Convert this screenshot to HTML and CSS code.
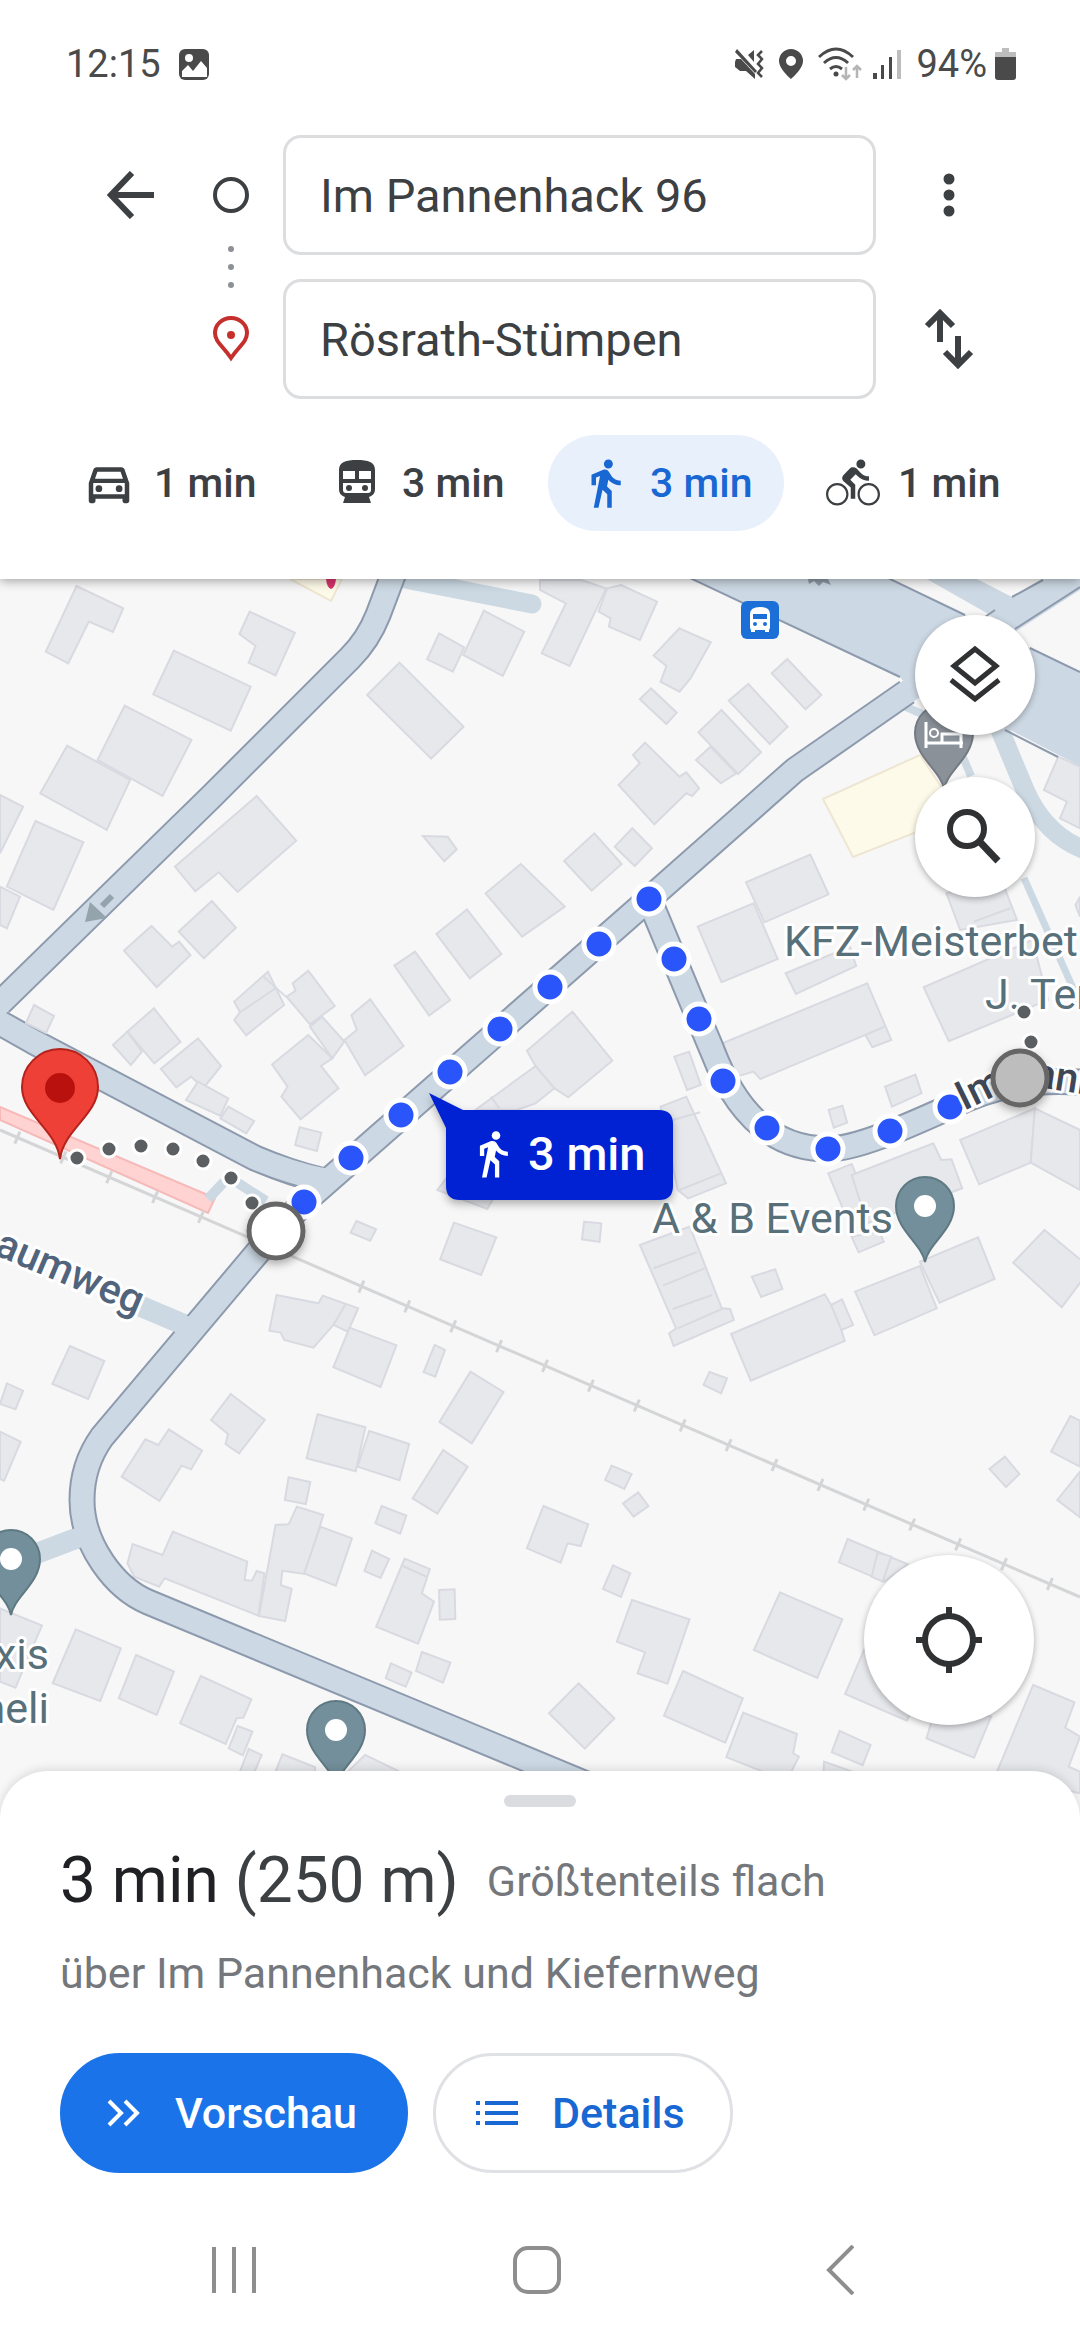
FILE: index.html
```html
<!DOCTYPE html>
<html lang="de">
<head>
<meta charset="utf-8">
<meta name="viewport" content="width=device-width, initial-scale=1">
<title>Route nach Rösrath-Stümpen</title>
<link rel="stylesheet" href="styles.css">
</head>
<body>
<div class="screen">
  <header class="top">
    <div class="status">
      <span>12:15</span>
      <svg class="status-photo" width="30" height="31" viewBox="0 0 30 31"><rect width="30" height="31" rx="6"/><circle cx="10" cy="9" r="4" fill="#fff"/><path d="M3 28V22l6-6 5 6 8-10 6 7v9z" fill="#fff"/></svg>
      <div class="status-icons">
        <svg width="29" height="30" viewBox="0 0 29 30"><path d="M1 10h5l14 15v5l-9-8H5l-5-4v-5zM13 6l6-5v12zM2 0l20 22-2 2L0 3z"/><path d="M27 2l-4 4 4 4-4 5 4 4-4 5 4 4" fill="none" stroke="#4a4a4a" stroke-width="2.500"/></svg>
        <svg width="24" height="30" viewBox="0 0 24 30"><path fill-rule="evenodd" d="M12 0a12 12 0 0 0-12 12c0 8 12 18 12 18s12-10 12-18A12 12 0 0 0 12 0zm0 7a5 5 0 1 1 0 10 5 5 0 0 1 0-10z"/></svg>
        <svg width="44" height="34" viewBox="0 0 44 34"><g fill="none" stroke="#4a4a4a" stroke-width="3"><path d="M1 10q17-16 34 0M6 16q12-11 24 0M12 22q6-5 12 0"/></g><circle cx="18" cy="27" r="2.500"/><path d="M28 20v12m-4-4l4 4 4-4M39 31V19m-4 4l4-4 4 4" fill="none" stroke="#b5b5b5" stroke-width="2.500"/></svg>
        <svg width="28" height="30" viewBox="0 0 28 30"><path d="M0 24h4v6H0zM8 16h3v14H8zM16 8h3v22h-3z"/><path d="M24 1h4v29h-4z" fill="#bdbdbd"/></svg>
        <span class="battery-text">94%</span>
        <svg width="21" height="32" viewBox="0 0 21 32"><path d="M7 0h7v4h7v6H0V4h7z" fill="#bdbdbd"/><path d="M0 9h21v20q0 3-3 3H3q-3 0-3-3z"/></svg>
      </div>
    </div>

    <form class="places">
      <button class="icon-button back" type="button" aria-label="Zurück"><svg width="48" height="48" viewBox="0 0 48 48"><path d="M47 24H4M25 2L4 24l21 22" fill="none" stroke="#3c4043" stroke-width="6"/></svg></button>
      <svg class="markers" width="60" height="264" viewBox="0 0 60 264"><circle cx="30" cy="60" r="16" fill="none" stroke="#3c4043" stroke-width="4"/><g fill="#8d9094"><circle cx="30" cy="114" r="3"/><circle cx="30" cy="132" r="3"/><circle cx="30" cy="150" r="3"/></g><path d="M30 223C22 211 14 207 14 198a16 15 0 0 1 32 0c0 9-8 13-16 25z" fill="none" stroke="#c5302c" stroke-width="4"/><circle cx="30" cy="200" r="4" fill="#c5302c"/></svg>
      <input class="place" type="text" value="Im Pannenhack 96" aria-label="Startort">
      <button class="icon-button" type="button" aria-label="Weitere Optionen"><svg width="12" height="44" viewBox="0 0 12 44" fill="#3c4043"><circle cx="6" cy="6" r="5.500"/><circle cx="6" cy="22" r="5.500"/><circle cx="6" cy="38" r="5.500"/></svg></button>
      <input class="place" type="text" value="Rösrath-Stümpen" aria-label="Ziel">
      <button class="icon-button" type="button" aria-label="Start und Ziel tauschen"><svg width="50" height="60" viewBox="0 0 50 60"><path d="M16 33V5M3 17L16 4l13 13M34 27v28M21 43l13 13 13-13" fill="none" stroke="#3c4043" stroke-width="6"/></svg></button>
    </form>

    <nav class="modes">
      <button class="mode" type="button"><svg viewBox="0 0 24 24"><path d="M18.920 6.010C18.720 5.420 18.160 5 17.500 5h-11c-.66 0-1.210.42-1.420 1.010L3 12v8c0 .55.45 1 1 1h1c.55 0 1-.45 1-1v-1h12v1c0 .55.45 1 1 1h1c.55 0 1-.45 1-1v-8l-2.080-5.990zM6.850 7h10.290l1.080 3.110H5.770L6.850 7zM19 17H5v-5h14v5z"/><circle cx="7.500" cy="14.500" r="1.500"/><circle cx="16.500" cy="14.500" r="1.500"/></svg>1 min</button>
      <button class="mode" type="button"><svg viewBox="0 0 54 54"><path fill-rule="evenodd" d="M9 14C9 6 16 4 27 4s18 2 18 10v19c0 5-3 7-6 8l2 6H13l2-6c-3-1-6-3-6-8zm4 1v8h12v-8zm16 0v8h12v-8zM13 27v7q0 3 3 3h22q3 0 3-3v-7z"/><circle cx="19" cy="32" r="3"/><circle cx="35" cy="32" r="3"/></svg>3 min</button>
      <button class="mode mode-active" type="button"><svg viewBox="0 0 24 24"><path d="M13.500 5.500c1.100 0 2-.9 2-2s-.9-2-2-2-2 .9-2 2 .9 2 2 2zM9.800 8.900L7 23h2.100l1.800-8 2.100 2v6h2v-7.500l-2.100-2 .6-3C14.800 12 16.800 13 19 13v-2c-1.900 0-3.500-1-4.300-2.400l-1-1.600c-.4-.6-1-1-1.700-1-.3 0-.5.1-.8.1L6 8.300V13h2V9.600l1.800-.7"/></svg>3 min</button>
      <button class="mode" type="button"><svg viewBox="0 0 24 24"><path d="M15.500 5.500c1.100 0 2-.9 2-2s-.9-2-2-2-2 .9-2 2 .9 2 2 2zM5 12c-2.800 0-5 2.200-5 5s2.200 5 5 5 5-2.200 5-5-2.200-5-5-5zm0 9c-2.200 0-4-1.800-4-4s1.800-4 4-4 4 1.800 4 4-1.800 4-4 4zm5.800-10.500l2.400-2.400.8.8c1.300 1.300 3 2.100 5.100 2.100V9c-1.500 0-2.700-.6-3.600-1.500l-1.900-1.900c-.5-.4-1-.6-1.600-.6s-1.100.2-1.400.6L7.800 8.400c-.4.4-.6.9-.6 1.400 0 .6.2 1.100.6 1.400L11 14v5h2v-6.200l-2.200-2.300zM19 12c-2.800 0-5 2.200-5 5s2.200 5 5 5 5-2.200 5-5-2.200-5-5-5zm0 9c-2.200 0-4-1.800-4-4s1.800-4 4-4 4 1.800 4 4-1.800 4-4 4z"/></svg>1 min</button>
    </nav>
  </header>

  <main class="map">
    <svg class="map-canvas" viewBox="0 579 1080 1240" preserveAspectRatio="xMidYMin slice">
      <defs>
        <path id="pin" d="M0 56C-3 38-29 24-29 0a29 29 0 0 1 58 0C29 24 3 38 0 56z"/>
        <filter id="soft" x="-30%" y="-30%" width="160%" height="180%"><feDropShadow dx="0" dy="4" stdDeviation="4" flood-opacity=".3"/></filter>
      </defs>

      <!-- buildings, north-west -->
      <g class="building" transform="translate(0 560) scale(.3444 .3333)">
        <path d="M222 78L358 145 328 216 258 185 198 310 133 275z"/>
        <path d="M725 155L856 218 800 346 722 308 742 258 695 222z"/>
        <path d="M505 272L728 380 670 512 445 403z"/>
        <path d="M362 437L556 540 472 708 283 600z"/>
        <path d="M195 557L378 660 310 810 117 700z"/>
        <path d="M0 705L67 740 0 880z"/>
        <path d="M103 783L242 847 155 1050 20 980z"/>
        <path d="M0 980L58 1010 20 1105 0 1095z"/>
        <path d="M745 708L860 842 690 996 635 937 567 994 508 920z"/>
        <path d="M1160 308L1346 500 1252 596 1066 405z"/>
        <path d="M1275 220L1348 262 1315 335 1240 298z"/>
        <path d="M1405 152L1522 215 1460 348 1345 285z"/>
        <path d="M1228 828L1300 830 1326 868 1290 904z"/>
        <path d="M1512 912L1640 1040 1516 1130 1410 1000z"/>
        <path d="M1356 1048L1456 1182 1364 1255 1267 1122z"/>
        <path d="M1205 1175L1307 1320 1246 1367 1145 1217z"/>
        <path d="M615 1023L685 1103 592 1195 519 1115z"/>
        <path d="M440 1098L500 1160 520 1145 553 1186 455 1282 360 1172z"/>
        <path d="M778 1235L825 1335 715 1426 680 1380 697 1357 680 1325z"/>
        <path d="M697 1357L800 1285M765 1250L830 1310"/>
        <path d="M895 1232L972 1338 900 1393 832 1310 858 1293 850 1270z"/>
        <path d="M1075 1318L1172 1458 1060 1546 1000 1440 1036 1410 1020 1365z"/>
        <path d="M935 1370L1000 1445 965 1495 900 1400z"/>
        <path d="M447 1345L524 1446 448 1510 370 1415z"/>
        <path d="M370 1415L412 1475 380 1515 328 1455z"/>
      </g>
      <!-- buildings, north-east -->
      <g class="building" transform="translate(540 560) scale(.3444 .3333)">
        <path d="M0 60H120L192 85 86 318 5 280 75 130 0 90z"/>
        <path d="M235 75L340 125 290 240 200 200 205 175 170 155 195 85z"/>
        <path d="M405 205L496 247 437 355 405 395 350 365 367 318 330 287z"/>
        <path d="M322 385L397 458 367 492 290 418z"/>
        <path d="M718 297L817 405 771 448 673 340z"/>
        <path d="M605 372L719 500 667 552 548 422z"/>
        <path d="M527 450L642 577 575 642 460 517z"/>
        <path d="M495 560L570 640 525 670 453 600z"/>
        <path d="M305 548L405 650 425 637 462 685 442 708 425 700 332 793 228 675 290 610 270 585z"/>
        <path d="M268 805L325 865 275 918 217 860z"/>
        <path d="M158 820L237 912 150 992 70 903z"/>
        <path d="M785 884L838 1003 652 1087 598 967z"/>
        <path d="M620 1030L690 1197 527 1267 458 1100z"/>
        <path d="M713 1240L900 1160 918 1218 743 1302z"/>
        <path d="M1114 1282L1430 1140 1475 1320 1187 1444z"/>
        <path d="M1180 1000L1340 960 1385 1080 1220 1110z"/>
        <path d="M1260 1085L1365 1045"/>
        <path d="M1505 590L1568 620V805L1510 775 1530 725 1463 690z"/>
        <path d="M1568 1010L1555 1035 1568 1070z"/>
        <path d="M530 1450L950 1270 1020 1440 965 1462 945 1425 640 1557 620 1535 570 1550z"/>
        <path d="M945 1425L1000 1400"/>
      </g>
      <!-- buildings, middle -->
      <g class="building" transform="translate(0 960) scale(.3444 .3333)">
        <path d="M575 235L642 318 590 385 555 350 512 382 467 327z"/>
        <path d="M575 365L663 415 640 468 540 420z"/>
        <path d="M663 440L738 483 715 520 640 475z"/>
        <path d="M895 225L965 295 932 318 983 385 873 478 817 410 835 380 790 313z"/>
        <path d="M870 502L933 518 920 573 857 555z"/>
        <path d="M1035 783L1092 808 1075 842 1018 818z"/>
        <path d="M1318 788L1441 832 1397 945 1278 898z"/>
        <path d="M803 1005L925 1030 937 1007 1040 1045 1010 1115 968 1095 910 1163 825 1140 815 1118 782 1112z"/>
        <path d="M1005 1030L968 1095"/>
        <path d="M1015 1103L1151 1156 1105 1281 968 1222z"/>
        <path d="M1262 1155L1292 1170 1264 1250 1230 1237z"/>
        <path d="M203 1158L303 1203 256 1317 152 1272z"/>
        <path d="M1366 1235L1462 1296 1370 1450 1276 1386z"/>
        <path d="M1662 155L1778 302 1650 412 1610 385 1555 430 1500 450H1380L1555 318 1530 272z"/>
        <path d="M1555 318L1610 385M1425 410L1450 445"/>
        <path d="M1270 690L1300 650 1430 720 1415 747z"/>
      </g>
      <!-- buildings, east -->
      <g class="building" transform="translate(540 960) scale(.3444 .3333)">
        <path d="M390 290L433 275 467 375 427 390z"/>
        <path d="M1002 380L1090 344 1108 400 1022 440z"/>
        <path d="M838 450L878 437 892 488 853 503z"/>
        <path d="M350 440L425 410 540 670 430 715 400 690z"/>
        <path d="M385 480L465 457M405 690L525 640"/>
        <path d="M837 640L905 612 955 740 885 760z"/>
        <path d="M905 645L1142 550 1165 600 1195 598 1226 685 950 790z"/>
        <path d="M1220 540L1437 445 1425 608 1275 673z"/>
        <path d="M1437 445L1568 510V690L1425 608z"/>
        <path d="M128 785L178 790 173 846 122 838z"/>
        <path d="M905 830L985 815 998 845 925 877z"/>
        <path d="M290 855L435 800 528 1045 552 1047 563 1080 388 1158 375 1120 395 1105z"/>
        <path d="M330 925L455 877M357 977L478 925M385 1047L500 1005M400 1105L528 1047"/>
        <path d="M615 950L683 928 704 987 642 1011z"/>
        <path d="M555 1122L827 1003 845 1035 877 1018 909 1095 875 1110 885 1143 612 1262z"/>
        <path d="M845 1035L875 1110"/>
        <path d="M915 995L1103 918 1152 1045 971 1126z"/>
        <path d="M1103 905L1272 832 1320 957 1160 1028z"/>
        <path d="M1465 810L1600 925 1515 1042 1374 908z"/>
        <path d="M492 1236L543 1255 526 1300 475 1275z"/>
      </g>
      <!-- buildings, south-west -->
      <g class="building" transform="translate(0 1360) scale(.3444 .3333)">
        <path d="M20 70L67 92 45 148 0 132z"/>
        <path d="M0 215L60 245 12 362 0 357z"/>
        <path d="M670 102L769 180 694 280 655 252 662 222 613 180z"/>
        <path d="M490 208L587 272 555 328 527 317 463 423 353 350 422 238 460 255z"/>
        <path d="M922 163L1061 202 1033 334 890 295z"/>
        <path d="M1072 213L1188 252 1160 361 1038 320z"/>
        <path d="M1287 270L1358 320 1270 461 1198 415z"/>
        <path d="M838 352L901 366 888 432 827 420z"/>
        <path d="M862 440L939 465 885 642 820 632 815 675 847 687 828 783 752 768 800 495 838 493z"/>
        <path d="M930 500L1022 535 975 677 883 640z"/>
        <path d="M1108 438L1180 467 1162 521 1090 490z"/>
        <path d="M1080 572L1130 597 1105 654 1058 633z"/>
        <path d="M1175 596L1248 627 1225 700 1260 725 1214 851 1092 800z"/>
        <path d="M1170 618L1238 650"/>
        <path d="M1275 690L1320 688 1322 777 1277 779z"/>
        <path d="M1225 876L1308 908 1286 968 1208 933z"/>
        <path d="M1135 910L1195 938 1178 980 1120 955z"/>
        <path d="M502 515L718 605 710 660 732 662 745 633 768 640 750 767 478 655 462 680 390 650 370 610 385 552 472 585z"/>
        <path d="M0 745L122 797 95 860 45 983 0 965z"/>
        <path d="M220 808L351 865 291 1023 153 970z"/>
        <path d="M395 885L505 935 455 1065 345 1015z"/>
        <path d="M583 948L730 1018 707 1073 687 1075 655 1152 523 1090z"/>
        <path d="M690 1098L733 1115 705 1186 664 1165z"/>
        <path d="M722 1167L760 1185 735 1245 695 1240z"/>
        <path d="M820 1183L915 1222V1240H798zM1060 1185L1160 1235V1245H1000z"/>
      </g>
      <!-- buildings, south-east -->
      <g class="building" transform="translate(540 1360) scale(.3444 .3333)">
        <path d="M208 317L266 342 245 387 189 360z"/>
        <path d="M285 397L315 438 272 470 241 430z"/>
        <path d="M10 438L140 493 118 558 80 550 60 608-38 565z"/>
        <path d="M212 616L262 640 235 711 183 687z"/>
        <path d="M267 720L434 778 370 971 283 940 305 877 223 845z"/>
        <path d="M415 933L589 1015 538 1148 360 1067z"/>
        <path d="M590 1058L746 1122 735 1180 752 1190 725 1245 660 1240 541 1192z"/>
        <path d="M697 697L878 778 805 954 621 870z"/>
        <path d="M112 970L216 1075 130 1166 26 1060z"/>
        <path d="M893 537L1068 613 1000 665 868 607z"/>
        <path d="M980 578L1020 590 995 665 963 650z"/>
        <path d="M945 860L1120 960 1065 1082 886 1002z"/>
        <path d="M1150 1040L1310 1070 1260 1193 1122 1135z"/>
        <path d="M870 1113L960 1155 937 1216 847 1177z"/>
        <path d="M825 1205L920 1240V1260H822z"/>
        <path d="M1432 975L1552 1027 1525 1103 1568 1130 1535 1220 1568 1235V1300L1325 1240z"/>
        <path d="M1350 290L1392 342 1353 381 1305 327z"/>
        <path d="M1540 168L1568 182V320L1484 275z"/>
        <path d="M1568 335L1502 420 1568 472z"/>
      </g>

      <!-- commercial plots -->
      <g fill="#fefae9" stroke="#eee6d3" stroke-width="2">
        <path d="M823 799L920 755 960 815 853 857z"/>
        <path d="M290 579L331 601 342 579z"/>
      </g>
      <path d="M326 579h10q-1 9-5 10-4-1-5-10z" fill="#d8346a"/>

      <!-- platform and railway -->
      <path d="M0 1107L215 1198 208 1213 0 1120z" fill="#fed3d1" stroke="#f6b9b8" stroke-width="2"/>
      <g fill="none" stroke="#d4d5d7">
        <path d="M0 1130L1080 1597" stroke-width="3"/>
        <path d="M16 1137L220 1225" stroke-width="13" stroke-dasharray="3 47"/>
        <path d="M360 1286L1080 1597" stroke-width="13" stroke-dasharray="3 47"/>
      </g>

      <!-- side roads -->
      <g fill="none" stroke="#ccd9e3">
        <path d="M400 578L532 604" stroke-width="19" stroke-linecap="round"/>
        <path d="M140 1306L185 1325" stroke-width="21"/>
        <path d="M30 1556L85 1535" stroke-width="21"/>
        <path d="M208 1199L224 1182M238 1183L266 1201" stroke-width="10"/>
        <path d="M1000 730L1025 790Q1045 835 1085 850" stroke-width="19"/>
        <path d="M1024 878L1085 1015" stroke-width="7"/>
        <path d="M962 755L971 776M904 706L922 714" stroke-width="8"/>
      </g>
      <!-- main road -->
      <path d="M690 578L900 677 917 697 1010 730 1080 766V671L1030 648 965 615 888 578z" fill="#ccd8e3"/>
      <path d="M925 578L985 612 1015 632 1080 590V578H1043L1012 597 975 578z" fill="#ccd8e3"/>
      <path d="M690 578L900 677M1005 730L1058 757M1030 648L1080 672M888 578L965 615M1012 597L1043 580M1015 629L1080 587M985 617L995 610" fill="none" stroke="#8d9aad" stroke-width="2"/>

      <!-- streets: dark casing under a light surface -->
      <g fill="none" stroke-linejoin="round" stroke="#8d9aad" stroke-width="27">
        <path d="M395 570L378 615Q368 640 350 658L211 797 0 1003"/>
        <path d="M-14 1015L34 1042 255 1158Q290 1173 320 1180"/>
        <path d="M907 692L795 770 649 899 304 1202 258 1252 102 1437Q82 1465 82 1500C82 1545 115 1588 148 1602L620 1798"/>
        <path d="M649 899L674 959 712 1050C735 1110 770 1149 828 1149C860 1149 920 1120 950 1107Q1010 1075 1090 1083"/>
      </g>
      <g fill="none" stroke-linejoin="round" stroke="#ccd8e3" stroke-width="23">
        <path d="M395 570L378 615Q368 640 350 658L211 797 -6 1009"/>
        <path d="M-14 1015L34 1042 255 1158Q290 1173 325 1180"/>
        <path d="M917 685L795 770 649 899 304 1202 258 1252 102 1437Q82 1465 82 1500C82 1545 115 1588 148 1602L620 1798"/>
        <path d="M649 899L674 959 712 1050C735 1110 770 1149 828 1149C860 1149 920 1120 950 1107Q1010 1075 1090 1083"/>
        <path d="M168 1318L188 1327" stroke-width="20"/>
        <path d="M66 1542L84 1536" stroke-width="20"/>
      </g>
      <path class="annex" d="M34 1005L54 1016 46 1033 26 1023z"/>
      <path d="M112 896L102 906" stroke="#93a4ad" stroke-width="6"/>
      <path d="M85 922L90 902 107 918z" fill="#93a4ad"/>
      <path d="M808 579h20l3 6-8-3-4 4-5-5-5 3z" fill="#8d99a5"/>

      <!-- bus stop -->
      <rect x="741" y="601" width="38" height="38" rx="6" fill="#1b6fd6"/>
      <path fill="#fff" fill-rule="evenodd" d="M750 614q0-7 10-7t10 7v14l-1 2v2h-4v-2h-10v2h-4v-2l-1-2zm3 0v5h14v-5zm2 8a1 1 0 1 0 0 4 1 1 0 0 0 0-4zm10 0a1 1 0 1 0 0 4 1 1 0 0 0 0-4z"/>

      <!-- place labels -->
      <g class="label">
        <text x="784" y="956">KFZ-Meisterbet</text>
        <text x="985" y="1009">J. Ter</text>
        <text x="652" y="1233">A &amp; B Events</text>
        <text x="49" y="1669" text-anchor="end">xis</text>
        <text x="49" y="1723" text-anchor="end">neli</text>
        <text class="street" transform="translate(-7 1254) rotate(23)">aumweg</text>
      </g>

      <!-- place pins -->
      <g fill="#738f9b" stroke="#5f7983" stroke-width="2">
        <use href="#pin" x="925" y="1206"/>
        <use href="#pin" x="11" y="1559"/>
        <use href="#pin" x="336" y="1730"/>
        <use href="#pin" x="944" y="733" fill="#8b9199" stroke="#747a82"/>
      </g>
      <g fill="#fff"><circle cx="925" cy="1206" r="11"/><circle cx="11" cy="1559" r="11"/><circle cx="336" cy="1730" r="11"/></g>
      <path d="M926 722v26M926 743h37M961 748v-14H942v9" fill="none" stroke="#fff" stroke-width="3"/>
      <circle cx="934" cy="733" r="4" fill="none" stroke="#fff" stroke-width="2"/>

      <!-- walking route -->
      <g fill="#2a55fb" stroke="#fff" stroke-width="5">
        <circle cx="304" cy="1202" r="15"/><circle cx="351" cy="1158" r="15"/><circle cx="401" cy="1115" r="15"/><circle cx="450" cy="1072" r="15"/><circle cx="500" cy="1029" r="15"/><circle cx="550" cy="987" r="15"/><circle cx="599" cy="944" r="15"/><circle cx="649" cy="899" r="15"/><circle cx="674" cy="959" r="15"/><circle cx="699" cy="1019" r="15"/><circle cx="723" cy="1081" r="15"/><circle cx="767" cy="1128" r="15"/><circle cx="828" cy="1149" r="15"/><circle cx="890" cy="1131" r="15"/><circle cx="950" cy="1107" r="15"/>
      </g>
      <g class="label street on-route">
        <text transform="translate(964 1111) rotate(-26)">Im</text>
        <text transform="translate(1032 1086) rotate(9)">ann</text>
      </g>
      <g fill="#5c5f61" stroke="#fff" stroke-width="3">
        <circle cx="77" cy="1158" r="8"/><circle cx="109" cy="1149" r="8"/><circle cx="141" cy="1146" r="8"/><circle cx="173" cy="1149" r="8"/><circle cx="203" cy="1161" r="8"/><circle cx="231" cy="1178" r="8"/><circle cx="252" cy="1203" r="8"/><circle cx="1024" cy="1012" r="8"/><circle cx="1031" cy="1042" r="8"/>
      </g>
      <g stroke="#666" stroke-width="5" filter="url(#soft)">
        <circle cx="276" cy="1231" r="27" fill="#fff"/>
        <circle cx="1020" cy="1078" r="27" fill="#bdbdbd"/>
      </g>

      <!-- destination pin -->
      <path d="M60 1159C56 1129 22 1115 22 1087a38 38 0 0 1 76 0C98 1115 64 1129 60 1159z" fill="#ee4036" stroke="#b3231c" stroke-width="2"/>
      <circle cx="60" cy="1088" r="15" fill="#b9120e"/>

      <!-- duration callout -->
      <path d="M429 1093L463 1110H659q14 0 14 14v62q0 14-14 14H460q-14 0-14-14V1128z" fill="#0521d3" filter="url(#soft)"/>
      <path transform="translate(467 1128) scale(2.150)" fill="#fff" d="M13.500 5.500c1.100 0 2-.9 2-2s-.9-2-2-2-2 .9-2 2 .9 2 2 2zM9.800 8.900L7 23h2.100l1.800-8 2.100 2v6h2v-7.500l-2.100-2 .6-3C14.800 12 16.800 13 19 13v-2c-1.900 0-3.500-1-4.300-2.400l-1-1.600c-.4-.6-1-1-1.700-1-.3 0-.5.1-.8.1L6 8.300V13h2V9.600l1.800-.7"/>
      <text class="callout" x="528" y="1170">3 min</text>
    </svg>

    <div class="map-tools">
      <button class="fab" type="button" aria-label="Ebenen"><svg width="60" height="60" viewBox="0 0 60 60"><path d="M30 4L9 21 30 38 51 21zM6 35L30 54 54 35" fill="none" stroke="#2f3133" stroke-width="5"/></svg></button>
      <button class="fab" type="button" aria-label="Suchen"><svg width="60" height="60" viewBox="0 0 60 60"><circle cx="22" cy="22" r="17" fill="none" stroke="#2f3133" stroke-width="6"/><path d="M35 35L53 54" stroke="#2f3133" stroke-width="7"/></svg></button>
    </div>
    <button class="fab fab-locate" type="button" aria-label="Mein Standort"><svg width="68" height="68" viewBox="0 0 68 68"><path d="M34 1v10M34 57v10M1 34h10M57 34h10" stroke="#2f3133" stroke-width="6"/><circle cx="34" cy="34" r="24" fill="none" stroke="#2f3133" stroke-width="6"/></svg></button>
  </main>

  <section class="sheet">
    <div class="handle"></div>
    <div class="summary">
      <h1><strong>3 min</strong> (250 m)</h1>
      <span>Größtenteils flach</span>
    </div>
    <p class="via">über Im Pannenhack und Kiefernweg</p>
    <div class="actions">
      <button class="action action-primary" type="button"><svg width="34" height="28" viewBox="0 0 34 28"><path d="M2 2l12 12L2 26M18 2l12 12-12 12" fill="none" stroke="#fff" stroke-width="4"/></svg>Vorschau</button>
      <button class="action" type="button"><svg width="42" height="24" viewBox="0 0 42 24" fill="#1967d2"><path d="M0 0h4v4H0zM9 0h33v4H9zM0 10h4v4H0zM9 10h33v4H9zM0 20h4v4H0zM9 20h33v4H9z"/></svg>Details</button>
    </div>
    <nav class="system">
      <button type="button" aria-label="Letzte Apps"><svg width="44" height="48" viewBox="0 0 44 48"><path d="M2 1v46M22 1v46M42 1v46"/></svg></button>
      <button type="button" aria-label="Startbildschirm"><svg width="48" height="48" viewBox="0 0 48 48"><rect x="2" y="2" width="44" height="44" rx="13"/></svg></button>
      <button type="button" aria-label="Zurück"><svg width="28" height="50" viewBox="0 0 28 50"><path d="M27 1L3 25l24 24"/></svg></button>
    </nav>
  </section>
</div>
</body>
</html>
```

FILE: styles.css
```css
* {
  box-sizing: border-box;
}

body {
  margin: 0;
  background: #fff;
  color: #3c4043;
  font-family: Roboto, "Liberation Sans", sans-serif;
  font-size: 43px;
}

button {
  margin: 0;
  padding: 0;
  border: 0;
  background: none;
  color: inherit;
  font: inherit;
}

svg {
  display: block;
  flex: none;
}

.screen {
  display: flex;
  flex-direction: column;
  min-height: 100vh;
}

/* Header */
.top {
  position: relative;
  z-index: 1;
  padding-bottom: 48px;
  background: #fff;
  box-shadow: 0 2px 10px rgba(0, 0, 0, 0.35);
}

.status {
  display: flex;
  align-items: center;
  gap: 18px;
  height: 128px;
  padding: 0 64px 0 66px;
  color: #4a4a4a;
  fill: #4a4a4a;
  font-size: 38px;
}

.status-icons {
  display: flex;
  align-items: center;
  gap: 15px;
  margin-left: auto;
}

.status-icons svg:nth-of-type(3) {
  margin-right: -4px;
}

.battery-text {
  margin-right: -7px;
}

.places {
  display: grid;
  grid-template-columns: 96px 60px 1fr 102px;
  grid-template-rows: 120px 120px;
  gap: 24px 22px;
  padding: 7px 80px 0 83px;
}

.icon-button {
  display: flex;
  align-items: center;
  justify-content: center;
}

.back {
  grid-area: 1 / 1;
}

.markers {
  grid-area: 1 / 2 / 3 / 3;
}

.place {
  grid-column: 3;
  width: 100%;
  min-width: 0;
  padding: 0 34px;
  border: 3px solid #dcdddf;
  border-radius: 18px;
  background: #fff;
  color: #3c4043;
  font: inherit;
  font-size: 47px;
}

.modes {
  display: grid;
  grid-template-columns: repeat(4, 1fr);
  gap: 12px;
  padding: 36px 48px 0 52px;
}

.mode {
  display: flex;
  align-items: center;
  gap: 18px;
  height: 96px;
  padding-left: 30px;
  border-radius: 48px;
  fill: #3c4043;
  font-size: 41px;
  font-weight: 500;
  white-space: nowrap;
}

.mode svg {
  width: 54px;
  height: 54px;
}

.mode-active {
  background: #e8f0fc;
  color: #1967d2;
  fill: #1967d2;
}

/* Map */
.map {
  position: relative;
  flex: 1 0 800px;
  overflow: hidden;
  background: #f7f7f7;
}

.map-canvas {
  position: absolute;
  inset: 0;
  width: 100%;
  height: 100%;
}

.building path,
.annex {
  fill: #e7e8ec;
  stroke: #d9dae1;
  stroke-width: 2px;
  vector-effect: non-scaling-stroke;
}

.label text {
  fill: #577079;
  stroke: #fff;
  stroke-width: 6px;
  stroke-linejoin: round;
  paint-order: stroke;
  font-size: 43px;
}

.label .street,
.street text {
  fill: #51647c;
  font-size: 41px;
  font-weight: 500;
}

.on-route text {
  fill: #3f4756;
}

.callout {
  fill: #fff;
  font-size: 47px;
  font-weight: 500;
}

.map-tools {
  position: absolute;
  top: 36px;
  right: 45px;
  display: flex;
  flex-direction: column;
  gap: 42px;
}

.fab {
  display: flex;
  align-items: center;
  justify-content: center;
  width: 120px;
  height: 120px;
  border-radius: 50%;
  background: #fff;
  box-shadow: 0 2px 6px rgba(0, 0, 0, 0.3);
}

.fab-locate {
  position: absolute;
  right: 46px;
  bottom: 94px;
  width: 170px;
  height: 170px;
}

/* Bottom sheet */
.sheet {
  position: relative;
  margin-top: -48px;
  padding-top: 24px;
  border-radius: 48px 48px 0 0;
  background: #fff;
  box-shadow: 0 -2px 10px rgba(0, 0, 0, 0.12);
}

.handle {
  width: 72px;
  height: 12px;
  margin: 0 auto 36px;
  border-radius: 6px;
  background: #dadce0;
}

.summary {
  display: flex;
  align-items: center;
  gap: 28px;
  padding: 0 60px;
  color: #74777b;
  white-space: nowrap;
}

.summary h1 {
  margin: 0;
  color: #3c4043;
  font-size: 64px;
  font-weight: 400;
  line-height: 76px;
}

.summary strong {
  color: #202124;
  font-weight: 400;
}

.via {
  margin: 28px 60px 54px;
  color: #74777b;
  line-height: 52px;
}

.actions {
  display: flex;
  gap: 25px;
  padding: 0 60px;
}

.action {
  display: flex;
  align-items: center;
  gap: 34px;
  height: 120px;
  padding: 0 45px 0 40px;
  border: 3px solid #dfe1e5;
  border-radius: 60px;
  color: #1967d2;
  font-size: 43px;
  font-weight: 500;
}

.action-primary {
  padding: 0 48px 0 44px;
  border-color: #1a73e8;
  background: #1a73e8;
  color: #fff;
}

.system {
  display: grid;
  grid-template-columns: repeat(3, 1fr);
  height: 140px;
  margin-top: 27px;
  padding: 0 88px 0 82px;
}

.system button {
  display: flex;
  align-items: center;
  justify-content: center;
}

.system svg {
  fill: none;
  stroke: #8e8e8e;
  stroke-width: 4px;
}
```
